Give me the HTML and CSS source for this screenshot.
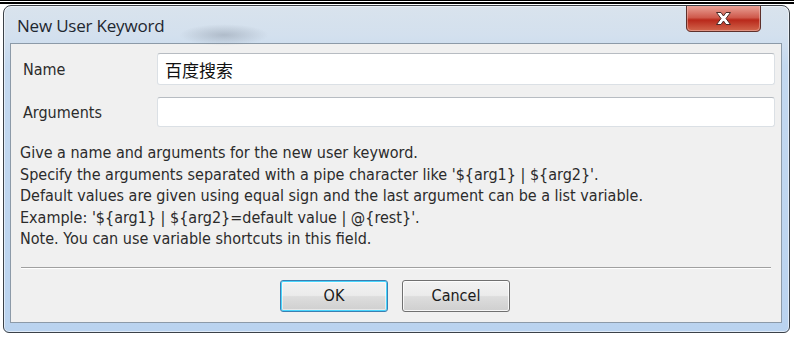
FILE: index.html
```html
<!DOCTYPE html>
<html>
<head>
<meta charset="utf-8">
<link rel="stylesheet" href="styles.css">
</head>
<body>
<div class="topline"></div>
<div class="window">
  <div class="titlebar">
    <span class="title">New User Keyword</span>
    <span class="blur"></span>
    <div class="close">
      <svg width="75" height="26" viewBox="0 0 75 26">
        <defs>
          <linearGradient id="cg" x1="0" y1="0" x2="0" y2="1">
            <stop offset="0" stop-color="#e9a196"/>
            <stop offset="0.45" stop-color="#cf5a4c"/>
            <stop offset="0.55" stop-color="#b9291b"/>
            <stop offset="1" stop-color="#d3694f"/>
          </linearGradient>
        </defs>
        <path d="M0.5 0 V21 Q0.5 25.5 5 25.5 H70 Q74.5 25.5 74.5 21 V0" fill="url(#cg)" stroke="#5e302b" stroke-width="1"/>
        <path d="M1.5 0 V21 Q1.5 24.5 5 24.5 H70 Q73.5 24.5 73.5 21 V0" fill="none" stroke="#f1c2b8" stroke-opacity="0.5" stroke-width="1"/>
        <path d="M30.5 6.5 L35 6.5 L37.5 10 L40 6.5 L44.5 6.5 L40 12.5 L44.5 18.5 L40 18.5 L37.5 15 L35 18.5 L30.5 18.5 L35 12.5 Z" fill="#fff" stroke="#4a2a26" stroke-width="1" stroke-linejoin="round"/>
      </svg>
    </div>
  </div>
  <div class="client">
    <div class="row">
      <span class="label">Name</span>
      <div class="input name">百度搜索</div>
    </div>
    <div class="row args">
      <span class="label">Arguments</span>
      <div class="input"></div>
    </div>
    <div class="help">
      <div>Give a name and arguments for the new user keyword.</div>
      <div>Specify the arguments separated with a pipe character like '${arg1} | ${arg2}'.</div>
      <div>Default values are given using equal sign and the last argument can be a list variable.</div>
      <div>Example: '${arg1} | ${arg2}=default value | @{rest}'.</div>
      <div>Note. You can use variable shortcuts in this field.</div>
    </div>
    <div class="sep"></div>
    <div class="buttons">
      <div class="btn default">OK</div>
      <div class="btn">Cancel</div>
    </div>
  </div>
</div>
</body>
</html>
```

FILE: styles.css
```css
html, body {
  margin: 0;
  padding: 0;
  background: #ffffff;
  width: 794px;
  height: 338px;
  overflow: hidden;
}

.topline {
  height: 1px;
  border-top: 1px solid #000;
  border-bottom: 2px solid #000;
}

.window {
  margin: 1px 4px 0 3px;
  height: 326px;
  border: 1px solid #3b4148;
  border-radius: 8px 8px 6px 6px;
  background: linear-gradient(180deg, #d9e3ed 0px, #d3e0ee 30px, #c3d8ef 60px, #bad3ef 100%);
  display: flex;
  flex-direction: column;
  box-shadow: inset 0 0 0 1px rgba(255,255,255,0.55);
}

.titlebar {
  height: 37px;
  display: flex;
  align-items: flex-start;
  padding: 0 28px 0 13px;
  position: relative;
}

.title {
  font-family: "Open Sans", "Noto Sans", sans-serif;
  font-size: 17px;
  color: #1e2730;
  margin-top: 9px;
  line-height: 22px;
  letter-spacing: -0.2px;
}

.blur {
  position: absolute;
  left: 175px;
  top: 18px;
  width: 90px;
  height: 22px;
  border-radius: 50%;
  background: radial-gradient(ellipse at center, rgba(110,120,135,0.35) 0%, rgba(110,120,135,0) 70%);
}

.close {
  height: 26px;
  margin-left: auto;
}
.close svg { display: block; }

.client {
  margin: 0 7px 9px 6px;
  flex: 1;
  background: #f0f0f0;
  border: 1px solid #8c9aa8;
  padding: 9px 6px 0 12px;
  font-family: "DejaVu Sans Condensed", "DejaVu Sans", sans-serif;
  font-size: 16px;
  color: #2b2b2b;
}

.row {
  display: flex;
  align-items: center;
  height: 32px;
}
.row.args {
  margin-top: 12px;
  height: 30px;
}

.label {
  width: 134px;
  flex: none;
}

.input {
  flex: 1;
  height: 100%;
  box-sizing: border-box;
  background: #fff;
  border: 1px solid #dbe0e5;
  border-top-color: #b7bcc2;
  border-radius: 3px;
  display: flex;
  align-items: center;
  padding-left: 7px;
  font-family: "Noto Sans CJK SC", sans-serif;
  font-size: 17px;
  color: #111;
}

.help {
  margin-top: 15px;
  line-height: 21.5px;
  margin-left: -3px;
}

.sep {
  margin: 17px 4px 0 -2px;
  height: 1px;
  background: #a0a0a0;
  border-bottom: 1px solid #fff;
}

.buttons {
  display: flex;
  justify-content: center;
  gap: 14px;
  margin-top: 11px;
  padding-right: 8px;
}

.btn {
  width: 108px;
  height: 32px;
  box-sizing: border-box;
  border: 1px solid #707070;
  border-radius: 3px;
  background: linear-gradient(180deg, #f2f2f2 0%, #ebebeb 48%, #dddddd 52%, #cfcfcf 100%);
  box-shadow: inset 0 0 0 1px rgba(255,255,255,0.8);
  display: flex;
  align-items: center;
  justify-content: center;
  color: #1a1a1a;
}

.btn.default {
  border-color: #3c7fb1;
  box-shadow: inset 0 0 0 1px #48d5fd, inset 0 0 0 2px rgba(255,255,255,0.5);
}
```
